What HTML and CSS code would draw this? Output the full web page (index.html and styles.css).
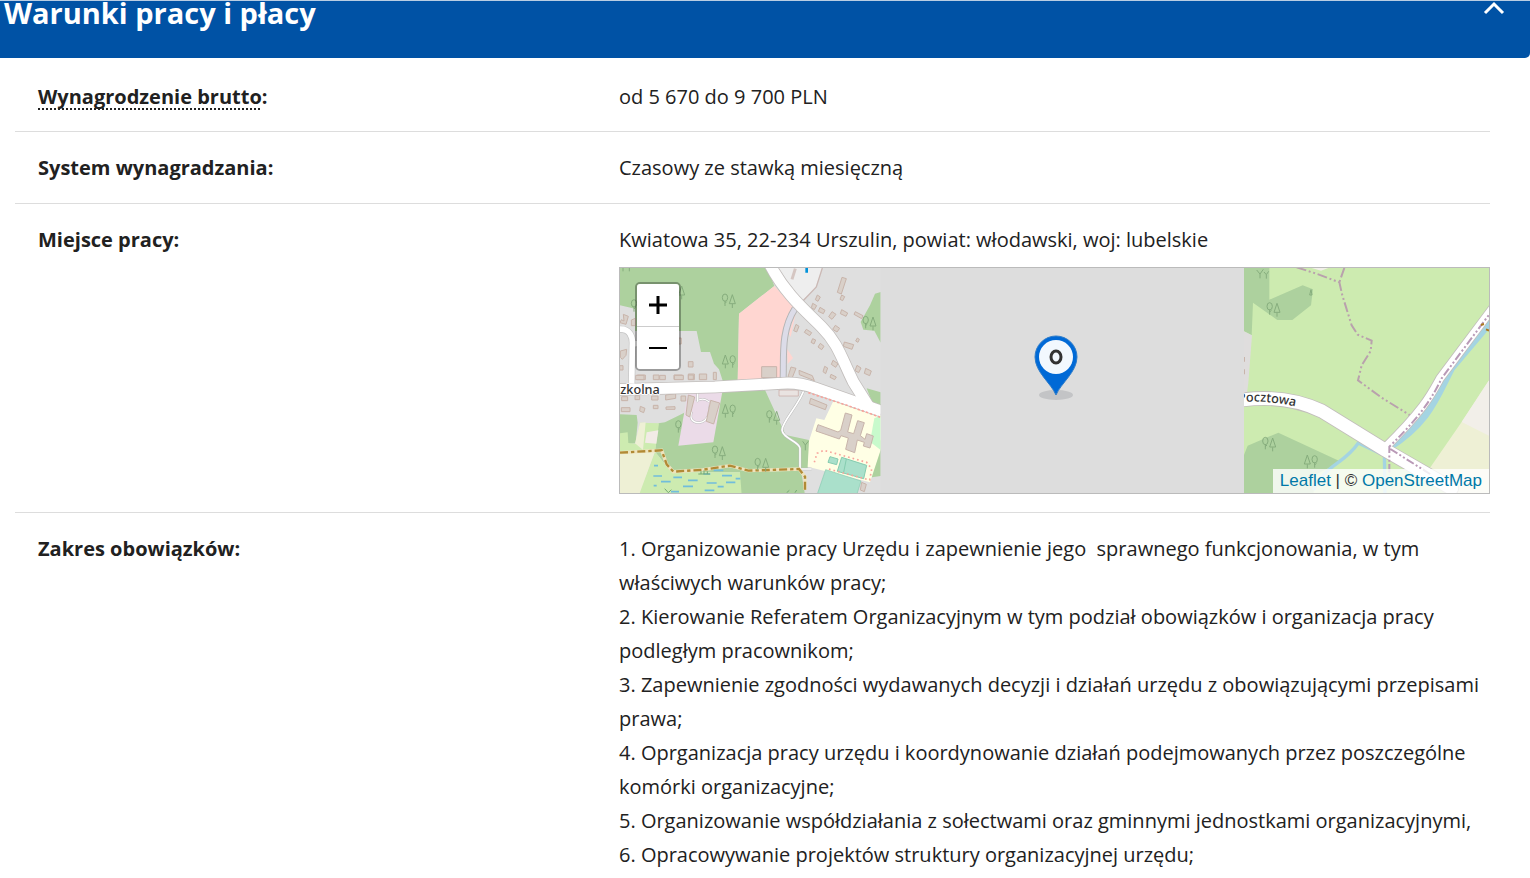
FILE: index.html
```html
<!DOCTYPE html>
<html lang="pl">
<head>
<meta charset="utf-8">
<meta name="viewport" content="width=device-width, initial-scale=1">
<title>Warunki pracy i płacy</title>
<link rel="stylesheet" href="styles.css">
</head>
<body>
<main>
<section class="panel">
<h2 class="panel-heading">
<button class="panel-toggle" type="button" aria-expanded="true" aria-controls="details">
<span class="panel-title">Warunki pracy i płacy</span>
<svg class="chevron" viewBox="0 0 22 14" aria-hidden="true"><path d="M2 12 11 3l9 9" fill="none" stroke="#fff" stroke-width="3"/></svg>
</button>
</h2>
<dl class="details" id="details">
<div class="row">
<dt><abbr class="hint" title="Wynagrodzenie brutto">Wynagrodzenie brutto</abbr>:</dt>
<dd>od 5 670 do 9 700 PLN</dd>
</div>
<div class="row">
<dt>System wynagradzania:</dt>
<dd>Czasowy ze stawką miesięczną</dd>
</div>
<div class="row">
<dt>Miejsce pracy:</dt>
<dd>Kwiatowa 35, 22-234 Urszulin, powiat: włodawski, woj: lubelskie
<div class="map">
<svg class="tiles" viewBox="15 18 2607 675" preserveAspectRatio="xMidYMid slice" role="img" aria-label="Mapa">
<defs>
<g id="leafy" fill="none" stroke="#86ad7d" stroke-width="3"><path d="M0 36V20M0 28l5-5"/><ellipse cy="11" rx="8" ry="11"/></g>
<g id="pine" fill="none" stroke="#86ad7d" stroke-width="3"><path d="M0 40V28M0 0-9 27H9Z"/></g>
<g id="trees"><use href="#leafy"/><use href="#pine" x="22" y="2"/></g>
<g id="trees-b"><use href="#pine"/><use href="#leafy" x="22" y="2"/></g>
<clipPath id="west"><path d="M15 18H797V700H15Z"/></clipPath>
<clipPath id="east"><path d="M1887 18H2640V700H1887Z"/></clipPath>
<path id="pocztowa" d="M10 82C70 76 130 80 240 108"/>
</defs>
<path d="M0 0H2640V700H0Z" fill="#ddd"/>
<g clip-path="url(#west)">
<path d="M15 18H797V700H15Z" fill="#dfdfdf"/>
<path d="M15 18H458L478 72 372 155 368 362H325L312 322 297 305 285 270H258L245 207H60V140L15 130Z" fill="#add19e"/>
<path d="M797 90 780 95 765 130 737 180 745 203 778 206 797 242Z" fill="#add19e"/>
<path d="M478 72 372 155 368 362H500L520 200 545 145Z" fill="#ffd6d1"/>
<path d="m516 260 18 28-16 18ZM545 140l-18 85-6-10Z" fill="#ffd6d1"/>
<path d="M490 18H622L600 80 560 116Z" fill="#eee"/>
<path d="M622 18 604 75 563 118" fill="none" stroke="#cbb9b5" stroke-width="4"/>
<path d="m541 20-10 32" stroke="#d5c6c2" stroke-width="9"/>
<path d="M571 18h8v14h-8Z" fill="#0092da"/>
<g fill="none" stroke="#b5b5b5" stroke-width="21"><path d="M540 140C495 210 508 290 504 360"/></g>
<g fill="none" stroke="#dcdce8" stroke-width="15"><path d="M540 140C495 210 508 290 504 360"/></g>
<g fill="#d9d0c9" stroke="#c8b4aa" stroke-width="3">
<path d="m681 46 13 4-15 46-12-5ZM680 99l9 5-6 12-8-4ZM607 99l9 6-7 13-8-5ZM593 124l12 7-7 12-9-6ZM615 136l15 9-5 10-15-7ZM651 149l12 8-12 15-10-8ZM680 143l18 10-5 10-17-8ZM721 149l23 12-4 9-23-13ZM661 190l13 9-8 11-13-8ZM574 202l16 10-6 9-16-10ZM543 187l9 6-7 17-9-4ZM593 230l9 4-5 12-9-5ZM616 244l11 9-7 10-11-8ZM688 240l28 8-5 14-26-9ZM727 228l6 4-4 9-7-4ZM654 295l15 10-7 11-13-9ZM629 313l9 5-6 17-8-6ZM648 337l16 8-5 8-14-7ZM692 342l12-14 6 6-10 16ZM726 310l12 8-7 14-11-6ZM752 319l17 8-5 14-16-7Z"/>
<path d="M440 314h45v33h-45ZM528 315l15 4-12 30-12-5ZM552 325l40 16 6 15-45-18ZM25 157l15 6-7 24-18-5 4-9 8 4ZM49 174l12-5v22H49ZM16 267l19-5-2 18-11 12-6-6ZM14 311h10v13H14ZM177 339h25v13h-25ZM220 336h18v17h-18ZM253 336h22v17h-22ZM295 331h9v22h-9ZM220 299h14v16h-14ZM115 339h17v14h-17ZM67 339h24v14H67ZM191 228h8v18h-8Z"/>
</g>
<g transform="translate(0 339)">
<path d="M320 45H450L512 180 585 196 578 282 558 285 570 360H375V292H170L120 230 130 145 150 142 205 115Z" fill="#add19e"/>
<path d="M15 118 65 120 68 143 62 205 15 210ZM775 248l22-55v110l-26 4ZM755 40l42 12v40l-25-8Z" fill="#add19e"/>
<path d="M15 175 38 172 40 204 62 206 75 143 132 145 120 230H15ZM120 230 170 292H375L380 360H70Z" fill="#cdebb0"/>
<path d="M75 143 92 142 84 225 60 205ZM15 235 120 229 72 360H15Z" fill="#eef0d5"/>
<path d="m95 172 35-6-6 40-34-3Z" fill="#f2ebe6"/>
<path d="M218 55 322 50 295 202 190 212Z" fill="#ebdbe8"/>
<path d="M244 80q18-15 38 0M230 110q-10 32 23 33 20-2 28-25L286 84" fill="none" stroke="#bbb" stroke-width="7"/>
<path d="M244 80q18-15 38 0M230 110q-10 32 23 33 20-2 28-25L286 84" fill="none" stroke="#fff" stroke-width="4"/>
<path d="M655 78 797 120V225L765 322 578 275 582 198 604 130 628 135Z" fill="#ffffe5"/>
<path d="M778 130 797 122V225L765 200Z" fill="#c8facc"/>
<path d="M632 284 738 318 725 360H606Z" fill="#aae0cb" stroke="#85ccb0" stroke-width="2"/>
<path d="m645 245 24 7-4 17-26-7ZM680 247l75 24-9 40-79-22Z" fill="#aae0cb" stroke="#85ccb0" stroke-width="3"/>
<path d="m694 252-8 40" stroke="#85ccb0" stroke-width="3"/>
<path d="M598 262 606 235 626 226 660 235 755 262 770 282 764 315 640 282" fill="none" stroke="#f8a49c" stroke-width="5" stroke-dasharray="5 9"/>
<path d="M492 45H550V63H492Z" fill="#e9e3e1" stroke="#c7a6a0" stroke-width="2"/>
<g fill="#d9d0c9" stroke="#c8b4aa" stroke-width="3">
<path d="m587 70 49 20-5 14-48-18ZM609 149l60 22 8-5 14-52 20 6-13 51 18 5 12-39 20 6-12 39 14 11 5-17 20 7-10 36-20-6 3-11-21-7-8 38-27-10 8-34-22-7-5 10-70-24Z"/>
<path d="m220 60 19 6-15 60-11-6ZM287 76l27 8-18 63-22-8ZM19 98h26v12H19ZM76 94l14 6-4 13-12-5ZM20 65h18v12H20ZM60 62h14v12H60ZM115 91h14v10h-14ZM110 63h19v12h-19ZM152 60l30-4v14l-30 5ZM153 96l27-1v8h-27ZM198 63h14v15h-14ZM740 322l14 6-6 22-12-5ZM62 1h25v13H62ZM134 1h17v13h-17ZM178 1h27v13h-27ZM220 0h15v13h-15Z"/>
</g>
<path d="M248 45v35M568 40C560 80 500 140 501 165S555 200 555 220V284M553 282H590" fill="none" stroke="#bbb" stroke-width="8"/>
<path d="M248 45v35M568 40C560 80 500 140 501 165S555 200 555 220V284M553 282H590" fill="none" stroke="#fff" stroke-width="5"/>
<path d="M15 233 140 226 155 268 175 290 265 284 345 272 400 287 552 282 570 305V345" fill="none" stroke="#eee3bd" stroke-width="10"/>
<path d="M15 233 140 226 155 268 175 290 265 284 345 272 400 287 552 282 570 305V345" fill="none" stroke="#b18a35" stroke-width="7" stroke-dasharray="24 9 10 9"/>
<path d="M117 272h12M115 303h26M138 320h29M116 332h9M175 307h26M219 316h29M204 334h30M168 350h24M265 297h21M296 286h29M321 302h30M275 324h30M333 322h28M308 335h18M362 311h14M269 346h29" stroke="#71bddb" stroke-width="5"/>
<path d="M250 297h35M258 297v-8M267 297v-11M277 297v-8M160 353l-11-12M160 353l9-9M515 353l8-7M540 353l5-8" stroke="#74aa74" stroke-width="3"/>
</g>
<g fill="none" stroke-linejoin="round">
<path d="M10 202C45 198 54 225 52 250L50 365" stroke="#c4c4c4" stroke-width="21"/>
<path d="M52 245H70M500 352V368" stroke="#bbb" stroke-width="21"/>
<path d="M0 383 300 375 500 364Q550 360 600 378L800 448" stroke="#c2bebc" stroke-width="38"/>
<path d="M465 8C510 95 570 145 620 195S680 290 715 360L765 440" stroke="#c2bebc" stroke-width="38"/>
<path d="M10 202C45 198 54 225 52 250L50 365M52 245H70" stroke="#fff" stroke-width="17"/>
<path d="M0 383 300 375 500 364Q550 360 600 378L800 448" stroke="#fff" stroke-width="33"/>
<path d="M465 8C510 95 570 145 620 195S680 290 715 360L765 440" stroke="#fff" stroke-width="33"/>
<path d="M580 392 690 428 797 466" stroke="#f8a49c" stroke-width="5" stroke-dasharray="7 6"/>
</g>
<use href="#trees" x="330" y="96"/><use href="#trees-b" x="331" y="279"/><use href="#trees" x="752" y="163"/><use href="#pine" x="200" y="72"/><use href="#leafy" x="57" y="113"/>
<path d="M24 18v10M43 18v10" stroke="#86ad7d" stroke-width="3"/>
<use href="#trees-b" x="331" y="427"/><use href="#trees" x="463" y="446"/><use href="#leafy" x="190" y="476"/><use href="#trees" x="300" y="552"/><use href="#leafy" x="428" y="589"/><use href="#pine" x="452" y="589"/>
<path d="m563 538 8 11v16M571 549l9-11" fill="none" stroke="#86ad7d" stroke-width="3"/>
<text class="street" x="-5" y="396">Szkolna</text>
</g>
<g clip-path="url(#east)">
<g transform="translate(1860 0)">
<path d="M27 18H790V700H27Z" fill="#cdebb0"/>
<path d="M27 18H103V113L203 70 234 82 228 130 172 174H127L54 122 50 220 27 208Z" fill="#add19e"/>
<path d="M27 208 51 220 40 362 35 400H27Z" fill="#dfdddd"/>
<path d="m28 285v14M28 322v15" stroke="#c8b4aa" stroke-width="4"/>
<path d="m230 18h50l-22 8Z" fill="#f2efe9"/>
<path d="M765 350 680 480 580 625 630 693H790V350Z" fill="#eef0d5"/>
<path d="M765 350 680 480 790 535V350Z" fill="#f2efe9"/>
<path d="M185 16 250 37 313 61 322 100 350 190 368 218 410 236 407 267 380 310 369 355 440 407 535 466M328 18 313 61" fill="none" stroke="#b9a1ad" stroke-width="6" stroke-dasharray="30 8 6 8 6 8"/>
</g>
<g transform="translate(1860 339)">
<path d="M27 240 38 212 130 173 318 260 240 300 235 360H27Z" fill="#add19e"/>
<path d="M235 345C280 260 325 270 370 204L450 242M448 230 450 360" fill="none" stroke="#a4d4e2" stroke-width="10"/>
<path d="M772-165 650-20C605 65 585 140 460 220" fill="none" stroke="#a4d4e2" stroke-width="20"/>
<g fill="none" stroke-linecap="round">
<path d="M780-210 615 10C590 55 570 100 450 218" stroke="#c2bebc" stroke-width="28"/>
<path d="M0 78C105 60 190 75 260 108L450 225 650 340" stroke="#c2bebc" stroke-width="44"/>
<path d="M780-210 615 10C590 55 570 100 450 218" stroke="#fff" stroke-width="23"/>
<path d="M0 78C105 60 190 75 260 108L450 225 650 340" stroke="#fff" stroke-width="39"/>
<path d="M780-205 620 10C595 60 570 110 463 215V300M466 222 590 300" stroke="#b99ab7" stroke-width="6" stroke-linecap="butt" stroke-dasharray="25 7 6 7 6 7"/>
</g>
<path d="m738-150 9-3M753-137l9 4" stroke="#ac7a20" stroke-width="6"/>
<text class="street"><textPath href="#pocztowa">Pocztowa</textPath></text>
<use href="#trees" x="91" y="187"/><use href="#trees-b" x="217" y="240"/>
</g>
<use href="#trees" x="1964" y="122"/>
<path d="m1925 24 10 12v13M1935 36l10-14M1947 30l7 8v12M1954 38l7-10M2088 83l-4 16h7Z" fill="none" stroke="#86ad7d" stroke-width="3"/>
</g>
</svg>
<div class="zoom">
<button type="button" aria-label="Powiększ"><svg viewBox="0 0 20 20" aria-hidden="true"><path d="M1 10H19M10 1V19" stroke="#000" stroke-width="3"/></svg></button>
<button type="button" aria-label="Pomniejsz"><svg viewBox="0 0 20 20" aria-hidden="true"><path d="M1 10H19" stroke="#000" stroke-width="2"/></svg></button>
</div>
<svg class="marker" viewBox="0 0 44 66" aria-hidden="true"><ellipse cx="22" cy="60" rx="17" ry="5" fill="#c3c4c6"/><path d="M22 60C17 48 1 37 1 22a21 21 0 0 1 42 0C43 37 27 48 22 60Z" fill="#0069d6" stroke="#2e7cc9"/><circle cx="22" cy="22" r="17" fill="#f2f8fe"/><ellipse cx="22" cy="22" rx="5" ry="6" fill="none" stroke="#333" stroke-width="3"/></svg>
<div class="attribution"><a href="#leaflet">Leaflet</a> | © <a href="#osm">OpenStreetMap</a></div>
</div>
</dd>
</div>
<div class="row">
<dt>Zakres obowiązków:</dt>
<dd>
<p>1. Organizowanie pracy Urzędu i zapewnienie jego&nbsp; sprawnego funkcjonowania, w tym właściwych warunków pracy;</p>
<p>2. Kierowanie Referatem Organizacyjnym w tym podział obowiązków i organizacja pracy podległym pracownikom;</p>
<p>3. Zapewnienie zgodności wydawanych decyzji i działań urzędu z obowiązującymi przepisami prawa;</p>
<p>4. Oprganizacja pracy urzędu i koordynowanie działań podejmowanych przez poszczególne komórki organizacyjne;</p>
<p>5. Organizowanie współdziałania z sołectwami oraz gminnymi jednostkami organizacyjnymi,</p>
<p>6. Opracowywanie projektów struktury organizacyjnej urzędu;</p>
</dd>
</div>
</dl>
</section>
</main>
</body>
</html>
```
FILE: styles.css
```css
* { box-sizing: border-box; }
body {
  margin: 0;
  background: #fff;
  color: #212121;
  font: 20px/34px "Open Sans", "Noto Sans", sans-serif;
}
.panel-heading {
  margin: 0;
  border-top: 1px solid #b9cde3;
  font-size: 29px;
}
.panel-toggle {
  display: flex;
  justify-content: space-between;
  align-items: flex-start;
  width: 100%;
  padding: 0 25px 26px 4px;
  border: 0;
  border-radius: 0 0 5px 0;
  background: #0052a5;
  color: #fff;
  font: inherit;
  line-height: 38px;
  text-align: left;
  overflow: hidden;
}
.panel-title { margin-top: -7px; }
.chevron { width: 22px; height: 14px; }
.details { margin: 0 40px 0 15px; }
.row {
  display: grid;
  grid-template-columns: 40.95% 1fr;
  padding: 19px 0 18px;
  border-bottom: 1px solid #ddd;
}
.row:first-child { padding: 22px 0 17px; }
.row:last-child { border-bottom: 0; }
dt { padding-left: 23px; font-weight: 700; }
dd { margin: 0; }
p { margin: 0; }
.hint {
  text-decoration: none;
  background: repeating-linear-gradient(to right, #212121 0 2px, transparent 2px 4px) left bottom / 100% 2px no-repeat;
}
.map {
  position: relative;
  height: 227px;
  margin-top: 10px;
  border: 1px solid #bbb;
  overflow: hidden;
}
.tiles { display: block; width: 100%; height: 100%; }
.street {
  fill: #333;
  stroke: #fff;
  stroke-width: 5px;
  paint-order: stroke;
  font-family: "Noto Sans", sans-serif;
  font-size: 38px;
  font-weight: 500;
}
.zoom {
  position: absolute;
  top: 14px;
  left: 15px;
  width: 46px;
  border: 2px solid rgba(0, 0, 0, .3);
  border-radius: 5px;
  background-clip: padding-box;
}
.zoom button {
  display: grid;
  place-items: center;
  width: 100%;
  height: 42px;
  padding: 0;
  border: 0;
  background: #fff;
}
.zoom button:first-child { height: 43px; border-bottom: 1px solid #ccc; border-radius: 3px 3px 0 0; }
.zoom button:last-child { border-radius: 0 0 3px 3px; }
.zoom svg { width: 20px; height: 20px; }
.marker {
  position: absolute;
  top: 67px;
  left: calc(50% - 21px);
  width: 44px;
  height: 66px;
}
.attribution {
  position: absolute;
  right: 0;
  bottom: 0;
  padding: 0 7px;
  background: rgba(255, 255, 255, .8);
  color: #333;
  font: 17px/24px "Liberation Sans", Arial, sans-serif;
}
.attribution a { color: #0078a8; text-decoration: none; }
```
